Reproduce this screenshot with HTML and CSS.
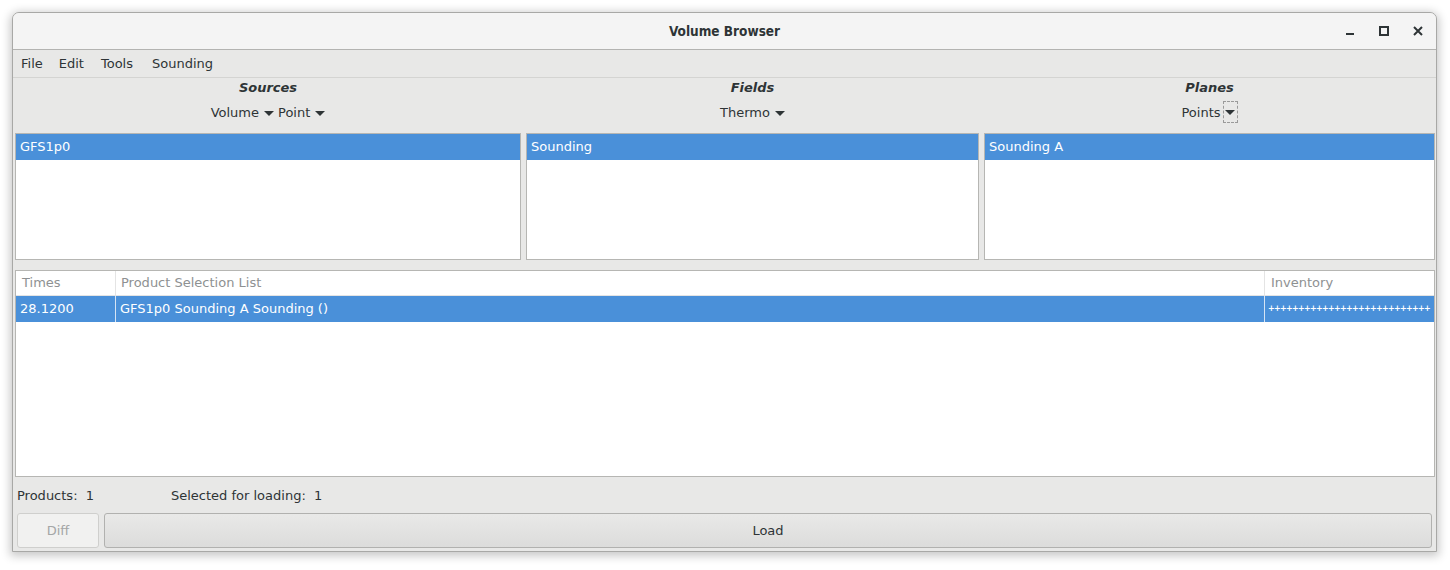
FILE: index.html
```html
<!DOCTYPE html>
<html>
<head>
<meta charset="utf-8">
<title>Volume Browser</title>
<link rel="stylesheet" href="styles.css">
</head>
<body>
<div class="window">
  <div class="titlebar">
    <span class="title">Volume Browser</span>
    <div class="controls">
      <svg class="ctl" width="14" height="14" viewBox="0 0 14 14"><rect x="3" y="9" width="8" height="2" fill="#2e3436"/></svg>
      <svg class="ctl" width="14" height="14" viewBox="0 0 14 14"><rect x="3" y="3" width="8" height="8" fill="none" stroke="#2e3436" stroke-width="2"/></svg>
      <svg class="ctl" width="14" height="14" viewBox="0 0 14 14"><path d="M3 3 L11 11 M11 3 L3 11" stroke="#2e3436" stroke-width="2"/></svg>
    </div>
  </div>
  <div class="menubar">
    <span class="menu-item">File</span>
    <span class="menu-item">Edit</span>
    <span class="menu-item">Tools</span>
    <span class="menu-item">Sounding</span>
  </div>
  <div class="content">
    <div class="panes">
      <div class="pane">
        <div class="pane-head">
          <div class="pane-label">Sources</div>
          <div class="combos">
            <span class="combo">Volume <span class="arrow"></span></span>
            <span class="combo">Point <span class="arrow"></span></span>
          </div>
        </div>
        <div class="list"><div class="row sel">GFS1p0</div></div>
      </div>
      <div class="pane">
        <div class="pane-head">
          <div class="pane-label">Fields</div>
          <div class="combos">
            <span class="combo">Thermo <span class="arrow"></span></span>
          </div>
        </div>
        <div class="list"><div class="row sel">Sounding</div></div>
      </div>
      <div class="pane">
        <div class="pane-head">
          <div class="pane-label">Planes</div>
          <div class="combos">
            <span class="combo">Points <span class="focusbox"><span class="arrow"></span></span></span>
          </div>
        </div>
        <div class="list"><div class="row sel">Sounding A</div></div>
      </div>
    </div>
    <div class="table">
      <div class="thead">
        <div class="c c1">Times</div>
        <div class="c c2">Product Selection List</div>
        <div class="c c3">Inventory</div>
      </div>
      <div class="trow sel">
        <div class="c c1">28.1200</div>
        <div class="c c2">GFS1p0 Sounding A Sounding ()</div>
        <div class="c c3 inv">+++++++++++++++++++++++++++</div>
      </div>
    </div>
    <div class="status">
      <span class="stat1">Products:&nbsp; 1</span>
      <span class="stat2">Selected for loading:&nbsp; 1</span>
    </div>
    <div class="buttons">
      <button class="btn diff" disabled>Diff</button>
      <button class="btn load">Load</button>
    </div>
  </div>
</div>
</body>
</html>
```
FILE: styles.css
```css
html, body {
  margin: 0;
  padding: 0;
  background: #ffffff;
}
body {
  font-family: "DejaVu Sans", sans-serif;
  font-size: 13px;
  color: #2e3436;
  width: 1450px;
  height: 570px;
  overflow: hidden;
}
.window {
  margin: 12px 0 0 12px;
  width: 1423px;
  height: 538px;
  border: 1px solid #a8a8a6;
  border-radius: 7px 7px 0 0;
  background: #e8e8e7;
  box-shadow: 0 2px 10px 2px rgba(0, 0, 0, 0.22);
  display: flex;
  flex-direction: column;
  overflow: hidden;
}
.titlebar {
  height: 36px;
  background: #f4f4f4;
  border-bottom: 1px solid #b3b3b1;
  display: flex;
  align-items: center;
  justify-content: center;
  position: relative;
  flex: none;
}
.title {
  font-weight: bold;
  font-family: "DejaVu Sans Condensed", "DejaVu Sans", sans-serif;
  font-stretch: condensed;
  font-size: 13.5px;
}
.controls {
  position: absolute;
  right: 11px;
  top: 11px;
  display: flex;
  gap: 20px;
}
.ctl {
  display: block;
}
.menubar {
  height: 27px;
  border-bottom: 1px solid #d4d4d2;
  display: flex;
  align-items: center;
  flex: none;
}
.menu-item {
  padding: 0 8px;
  line-height: 27px;
}
.menu-item:nth-child(n+3) {
  margin-left: 1px;
}
.menu-item:nth-child(4) {
  margin-left: 3px;
}
.content {
  padding: 0 1px 0 2px;
  display: flex;
  flex-direction: column;
  flex: 1;
}
.panes {
  display: grid;
  grid-template-columns: 506px 453px 451px;
  column-gap: 5px;
}
.pane-head {
  height: 55px;
  display: flex;
  flex-direction: column;
  align-items: center;
}
.pane-label {
  font-weight: bold;
  font-style: italic;
  margin-top: 2px;
  line-height: 16px;
}
.combos {
  margin-top: 4px;
  height: 23px;
  display: flex;
  align-items: center;
  gap: 4px;
}
.combo {
  display: inline-flex;
  align-items: center;
  line-height: 16px;
  padding-top: 2px;
}
.arrow {
  display: inline-block;
  width: 0;
  height: 0;
  border-left: 5px solid transparent;
  border-right: 5px solid transparent;
  border-top: 5px solid #2e3436;
  margin-left: 5px;
  margin-top: 1px;
}
.focusbox {
  display: inline-flex;
  align-items: center;
  justify-content: center;
  width: 13px;
  height: 20px;
  border: 1px dashed #9a9a9a;
  margin-left: 2px;
  margin-top: -1px;
}
.focusbox .arrow {
  margin-left: 0;
}
.list {
  height: 125px;
  border: 1px solid #b6b6b3;
  background: #ffffff;
}
.row {
  height: 26px;
  line-height: 26px;
  padding-left: 4px;
}
.sel {
  background: #4a90d9;
  color: #ffffff;
}
.table {
  margin-top: 10px;
  height: 205px;
  border: 1px solid #b6b6b3;
  background: #ffffff;
  overflow: hidden;
}
.thead, .trow {
  display: grid;
  grid-template-columns: 100px 1149px 1fr;
}
.thead {
  height: 24px;
  color: #8e9192;
  border-bottom: 1px solid #e4e4e4;
}
.thead .c {
  line-height: 24px;
  padding-left: 6px;
}
.thead .c2 {
  padding-left: 5px;
}
.c {
  border-right: 1px solid #e4e4e4;
  white-space: nowrap;
  overflow: hidden;
}
.c3 {
  border-right: none;
}
.trow {
  height: 26px;
}
.trow .c {
  line-height: 26px;
  padding-left: 4px;
  border-right-color: #d6e4f4;
}
.trow .inv {
  font-weight: bold;
  font-size: 8px;
  letter-spacing: -0.7px;
  padding-left: 3px;
}
.status {
  height: 36px;
  display: flex;
  align-items: center;
  padding-left: 2px;
}
.stat1 {
  width: 154px;
}
.buttons {
  display: flex;
  gap: 5px;
  padding: 0 3px 0 2px;
}
.btn {
  height: 35px;
  font-family: "DejaVu Sans", sans-serif;
  font-size: 13px;
  border-radius: 3px;
  padding: 0;
}
.diff {
  width: 82px;
  background: #f1f1f0;
  border: 1px solid #cfcfcd;
  color: #a4a6a6;
}
.load {
  flex: 1;
  color: #2e3436;
  border: 1px solid #b1b1af;
  background: linear-gradient(to bottom, #e9e9e8 0%, #dcdcdb 100%);
}
```
